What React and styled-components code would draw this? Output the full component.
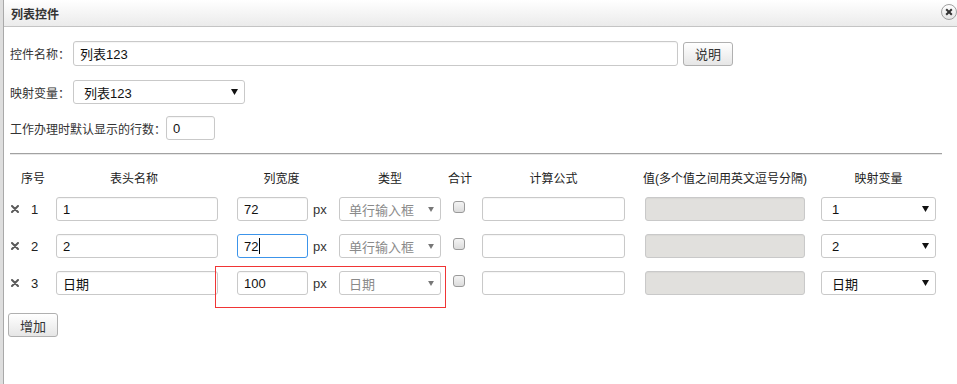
import React from "react";
import styled, { createGlobalStyle } from "styled-components";

const GlobalStyle = createGlobalStyle`
  html, body { margin: 0; padding: 0; background: #fff; }
  body {
    font-family: "Liberation Sans", "Noto Sans CJK SC", sans-serif;
    font-size: 12px;
    color: #333;
  }
`;

const Dialog = styled.div`
  width: 957px;
  height: 384px;
  box-sizing: border-box;
  padding-left: 4px;
  box-shadow: inset 3px 0 0 #dedede, inset 4px 0 0 #a9a9a9;
  overflow: hidden;
`;

const TitleBar = styled.div`
  height: 26px;
  border-bottom: 1px solid #c4c4c4;
  background: linear-gradient(#ffffff, #ebebeb);
  display: flex;
  align-items: center;
  justify-content: space-between;
  padding-left: 7px;
`;

const Title = styled.div`
  font-weight: bold;
  font-size: 12px;
  color: #333;
`;

const CloseBtn = styled.div`
  width: 14px;
  height: 14px;
  border: 1px solid #a0a0a0;
  border-radius: 50%;
  background: linear-gradient(#ffffff, #e4e4e4);
  display: flex;
  align-items: center;
  justify-content: center;
  margin-top: -2px;
`;

const Body = styled.div`
  padding: 14px 15px 0 6px;
`;

const FormRow = styled.div`
  display: flex;
  align-items: center;
  margin-bottom: ${(p) => p.$mb || 0}px;
`;

const Label = styled.span`
  font-family: "Noto Sans CJK SC", sans-serif;
  font-size: 12px;
  color: #333;
  white-space: nowrap;
  margin-right: ${(p) => p.$mr || 0}px;
`;

const TextInput = styled.input`
  box-sizing: border-box;
  width: ${(p) => p.$w}px;
  height: ${(p) => p.$h || 24}px;
  border: 1px solid #c9c9c9;
  border-radius: 3px;
  box-shadow: inset 0 1px 1px rgba(0, 0, 0, 0.04);
  background: ${(p) => (p.disabled ? "#e1e0dd" : "#fff")};
  padding: 0 6px;
  font-family: "Liberation Sans", "Noto Sans CJK SC", sans-serif;
  font-size: 13px;
  color: #111;
  outline: none;
  margin: 0;
`;

const FocusField = styled.div`
  box-sizing: border-box;
  width: ${(p) => p.$w}px;
  height: 24px;
  border: 1px solid #3c94ea;
  border-radius: 3px;
  padding: 0 6px;
  display: flex;
  align-items: center;
  font-size: 13px;
  color: #111;
`;

const Caret = styled.span`
  display: inline-block;
  width: 1px;
  height: 16px;
  background: #000;
  margin-left: 1px;
`;

const SelectBox = styled.div`
  box-sizing: border-box;
  width: ${(p) => p.$w}px;
  height: 24px;
  border: 1px solid #c9c9c9;
  border-radius: 3px;
  background: #fff;
  display: flex;
  align-items: center;
  justify-content: space-between;
  padding: 0 ${(p) => p.$pr || 8}px 0 ${(p) => p.$pl || 9}px;
  font-size: 13px;
  color: ${(p) => (p.$muted ? "#8a8a8a" : "#111")};
`;

const Button = styled.button`
  box-sizing: border-box;
  width: ${(p) => p.$w || 50}px;
  height: 24px;
  border: 1px solid #b0b0b0;
  border-radius: 3px;
  background: linear-gradient(#ffffff, #e6e6e6);
  font-family: "Liberation Sans", "Noto Sans CJK SC", sans-serif;
  font-size: 13px;
  color: #333;
  padding: 0;
  margin: 0 0 0 ${(p) => p.$ml || 0}px;
  cursor: pointer;
`;

const Divider = styled.hr`
  margin: 13px 0 0 0;
  border: 0;
  border-top: 1px solid #a2a2a2;
  border-bottom: 1px solid #e8e8e8;
  height: 0;
`;

const Table = styled.div`
  position: relative;
  margin: 10px 0 0 0;
`;

const COLS = "46px 181px 102px 114px 29px 163px 176px 115px";

const HeadRow = styled.div`
  display: grid;
  grid-template-columns: ${COLS};
  height: 24px;
  align-items: center;
`;

const HeadCell = styled.div`
  width: ${(p) => p.$w}px;
  display: flex;
  justify-content: center;
  white-space: nowrap;
  font-size: 12px;
  color: #222;
`;

const Row = styled.div`
  display: grid;
  grid-template-columns: ${COLS};
  align-items: center;
  height: 24px;
  margin-top: ${(p) => p.$mt}px;
`;

const IndexCell = styled.div`
  display: flex;
  align-items: center;
  padding-left: 1px;
  gap: 12px;
  font-size: 13px;
  color: #222;
`;

const InlineCell = styled.div`
  display: flex;
  align-items: center;
`;

const Unit = styled.span`
  font-size: 13px;
  color: #333;
  margin-left: 5px;
`;

const Checkbox = styled.div`
  box-sizing: border-box;
  width: 12px;
  height: 12px;
  border: 1px solid #9a9a9a;
  border-radius: 3px;
  background: linear-gradient(#f4f4f4, #dcdcdc);
  align-self: start;
  margin-top: 4px;
`;

const Highlight = styled.div`
  position: absolute;
  left: 205px;
  top: 101px;
  width: 231px;
  height: 42px;
  box-sizing: border-box;
  border: 1px solid #f03535;
  pointer-events: none;
`;

const AddRow = styled.div`
  margin-top: 18px;
  margin-left: 2px;
`;

const Arrow = ({ color = "#111", size = 7 }) => (
  <svg width={size} height={size - 1} viewBox="0 0 7 6">
    <path d="M0 0 H7 L3.5 6 Z" fill={color} />
  </svg>
);

const RemoveIcon = () => (
  <svg width="8" height="8" viewBox="0 0 8 8">
    <path d="M1 1 L7 7 M7 1 L1 7" stroke="#5a5a5a" strokeWidth="2" strokeLinecap="round" />
  </svg>
);

const CloseIcon = () => (
  <svg width="8" height="8" viewBox="0 0 8 8">
    <path d="M1.2 1.2 L6.8 6.8 M6.8 1.2 L1.2 6.8" stroke="#333" strokeWidth="2" />
  </svg>
);

const rows = [
  { n: 1, name: "1", width: "72", type: "单行输入框", map: "1" },
  { n: 2, name: "2", width: "72", type: "单行输入框", map: "2", focus: true },
  { n: 3, name: "日期", width: "100", type: "日期", map: "日期" },
];

export default function App() {
  return (
    <>
      <GlobalStyle />
      <Dialog>
        <TitleBar>
          <Title>列表控件</Title>
          <CloseBtn>
            <CloseIcon />
          </CloseBtn>
        </TitleBar>
        <Body>
          <FormRow $mb={14}>
            <Label $mr={3}>控件名称：</Label>
            <TextInput $w={605} $h={25} readOnly value="列表123" />
            <Button $w={50} $ml={5}>说明</Button>
          </FormRow>
          <FormRow $mb={12}>
            <Label $mr={3}>映射变量：</Label>
            <SelectBox $w={172} $pl={10} $pr={6}>
              <span>列表123</span>
              <Arrow />
            </SelectBox>
          </FormRow>
          <FormRow>
            <Label>工作办理时默认显示的行数：</Label>
            <TextInput $w={49} readOnly value="0" />
          </FormRow>
          <Divider />
          <Table>
            <HeadRow>
              <HeadCell $w={46}>序号</HeadCell>
              <HeadCell $w={156}>表头名称</HeadCell>
              <HeadCell $w={89}>列宽度</HeadCell>
              <HeadCell $w={102}>类型</HeadCell>
              <HeadCell $w={14}>合计</HeadCell>
              <HeadCell $w={143}>计算公式</HeadCell>
              <HeadCell $w={160}>值(多个值之间用英文逗号分隔)</HeadCell>
              <HeadCell $w={115}>映射变量</HeadCell>
            </HeadRow>
            {rows.map((r, i) => (
              <Row key={r.n} $mt={i === 0 ? 8 : 13}>
                <IndexCell>
                  <RemoveIcon />
                  <span>{r.n}</span>
                </IndexCell>
                <TextInput $w={162} readOnly value={r.name} />
                <InlineCell>
                  {r.focus ? (
                    <FocusField $w={71}>
                      {r.width}
                      <Caret />
                    </FocusField>
                  ) : (
                    <TextInput $w={71} readOnly value={r.width} />
                  )}
                  <Unit>px</Unit>
                </InlineCell>
                <SelectBox $w={102} $muted $pr={6}>
                  <span>{r.type}</span>
                  <Arrow color="#777" size={6} />
                </SelectBox>
                <Checkbox />
                <TextInput $w={143} readOnly value="" />
                <TextInput $w={160} disabled value="" />
                <SelectBox $w={115} $pl={10} $pr={6}>
                  <span>{r.map}</span>
                  <Arrow />
                </SelectBox>
              </Row>
            ))}
            <Highlight />
          </Table>
          <AddRow>
            <Button $w={50} $ml={-4}>增加</Button>
          </AddRow>
        </Body>
      </Dialog>
    </>
  );
}
